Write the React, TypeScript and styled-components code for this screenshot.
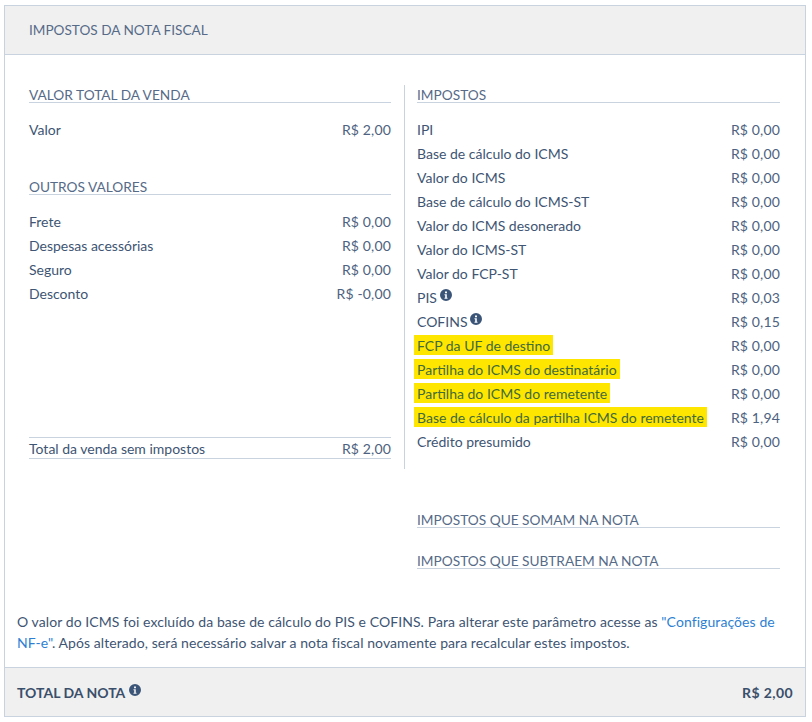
import styled, { createGlobalStyle } from "styled-components";

const Global = createGlobalStyle`
  html, body {
    margin: 0;
    padding: 0;
    background: #fff;
  }
  body {
    font-family: Lato, "Liberation Sans", sans-serif;
    font-size: 14px;
    color: #3e5573;
  }
`;

const Page = styled.div`
  padding: 5px 6px 0 4px;
`;

const Panel = styled.section`
  border: 1px solid #c9d3e0;
  background: #fff;
`;

const Header = styled.header`
  display: flex;
  align-items: center;
  box-sizing: border-box;
  height: 49px;
  padding: 0 24px 1px;
  background: #f0f0f0;
  border-bottom: 1px solid #c9d3e0;
  font-size: 13.6px;
  color: #566b88;
`;

const Columns = styled.div`
  display: grid;
  grid-template-columns: 375px 376px;
  margin: 30px 0 0 24px;
`;

const Column = styled.div<{ $divided?: boolean }>`
  display: flex;
  flex-direction: column;
  height: 384px;
  box-sizing: border-box;
  ${(p) =>
    p.$divided
      ? "border-left: 1px solid #c9d3e0; padding-left: 12px;"
      : "padding-right: 13px;"}
`;

const SectionTitle = styled.h3<{ $spaced?: boolean }>`
  margin: ${(p) => (p.$spaced ? "36px" : "0")} 0 14px;
  height: 17px;
  line-height: 20px;
  font-size: 13.7px;
  font-weight: 400;
  color: #566b88;
  border-bottom: 1px solid #c9d3e0;
`;

const Row = styled.div`
  display: flex;
  justify-content: space-between;
  align-items: center;
  height: 24px;
`;

const Label = styled.span<{ $marked?: boolean }>`
  display: inline-flex;
  align-items: center;
  gap: 3px;
  ${(p) =>
    p.$marked &&
    "height: 20px; margin-left: -3px; padding: 0 3px; background: #ffe600; color: #3f6a3a;"}
`;

const Value = styled.span`
  color: #4d6280;
  letter-spacing: 0.15px;
`;

const TotalRow = styled(Row)`
  margin-top: auto;
  margin-bottom: 10px;
  padding-top: 1px;
  height: 19px;
  border-top: 1px solid #c9d3e0;
  border-bottom: 1px solid #c9d3e0;
`;

const Extras = styled.div`
  margin: 41px 0 0 412px;
  width: 363px;
`;

const ExtraTitle = styled(SectionTitle)`
  margin: 0 0 23px;
`;

const Note = styled.p`
  margin: 42px 30px 14px 12px;
  line-height: 21px;
  font-size: 14px;
  letter-spacing: 0.08px;
`;

const NoteLink = styled.a`
  color: #2d7fd3;
  text-decoration: none;
`;

const Footer = styled.footer`
  display: flex;
  justify-content: space-between;
  align-items: center;
  height: 48px;
  padding: 0 12px;
  background: #f0f0f0;
  border-top: 1px solid #c9d3e0;
  font-weight: 700;
  color: #3a4f6b;
`;

const FooterLabel = styled.span`
  display: inline-flex;
  align-items: center;
  gap: 4px;
`;

const FooterValue = styled.span`
  letter-spacing: 0.4px;
`;

const InfoSvg = styled.svg`
  width: 12px;
  height: 12px;
  margin-top: -4px;
  fill: #3b5578;
`;

function InfoIcon() {
  return (
    <InfoSvg viewBox="0 0 12 12" aria-hidden="true">
      <path
        fillRule="evenodd"
        d="M6 0a6 6 0 1 1 0 12A6 6 0 0 1 6 0ZM5 2.4v1.8h2V2.4H5ZM4.5 5.2v1h.7v2.5h-.7v1h3v-1h-.7V5.2H4.5Z"
      />
    </InfoSvg>
  );
}

type Item = { label: string; value: string; info?: boolean; marked?: boolean };

const others: Item[] = [
  { label: "Frete", value: "R$ 0,00" },
  { label: "Despesas acessórias", value: "R$ 0,00" },
  { label: "Seguro", value: "R$ 0,00" },
  { label: "Desconto", value: "R$ -0,00" },
];

const taxes: Item[] = [
  { label: "IPI", value: "R$ 0,00" },
  { label: "Base de cálculo do ICMS", value: "R$ 0,00" },
  { label: "Valor do ICMS", value: "R$ 0,00" },
  { label: "Base de cálculo do ICMS-ST", value: "R$ 0,00" },
  { label: "Valor do ICMS desonerado", value: "R$ 0,00" },
  { label: "Valor do ICMS-ST", value: "R$ 0,00" },
  { label: "Valor do FCP-ST", value: "R$ 0,00" },
  { label: "PIS", value: "R$ 0,03", info: true },
  { label: "COFINS", value: "R$ 0,15", info: true },
  { label: "FCP da UF de destino", value: "R$ 0,00", marked: true },
  { label: "Partilha do ICMS do destinatário", value: "R$ 0,00", marked: true },
  { label: "Partilha do ICMS do remetente", value: "R$ 0,00", marked: true },
  { label: "Base de cálculo da partilha ICMS do remetente", value: "R$ 1,94", marked: true },
  { label: "Crédito presumido", value: "R$ 0,00" },
];

function ItemRow({ item }: { item: Item }) {
  return (
    <Row>
      <Label $marked={item.marked}>
        {item.label}
        {item.info && <InfoIcon />}
      </Label>
      <Value>{item.value}</Value>
    </Row>
  );
}

export default function App() {
  return (
    <Page>
      <Global />
      <Panel>
        <Header>IMPOSTOS DA NOTA FISCAL</Header>
        <Columns>
          <Column>
            <SectionTitle>VALOR TOTAL DA VENDA</SectionTitle>
            <ItemRow item={{ label: "Valor", value: "R$ 2,00" }} />
            <SectionTitle $spaced>OUTROS VALORES</SectionTitle>
            {others.map((item) => (
              <ItemRow key={item.label} item={item} />
            ))}
            <TotalRow>
              <Label>Total da venda sem impostos</Label>
              <Value>R$ 2,00</Value>
            </TotalRow>
          </Column>
          <Column $divided>
            <SectionTitle>IMPOSTOS</SectionTitle>
            {taxes.map((item) => (
              <ItemRow key={item.label} item={item} />
            ))}
          </Column>
        </Columns>
        <Extras>
          <ExtraTitle>IMPOSTOS QUE SOMAM NA NOTA</ExtraTitle>
          <ExtraTitle>IMPOSTOS QUE SUBTRAEM NA NOTA</ExtraTitle>
        </Extras>
        <Note>
          O valor do ICMS foi excluído da base de cálculo do PIS e COFINS. Para alterar este
          parâmetro acesse as <NoteLink>"Configurações de NF-e"</NoteLink>. Após alterado, será
          necessário salvar a nota fiscal novamente para recalcular estes impostos.
        </Note>
        <Footer>
          <FooterLabel>
            TOTAL DA NOTA
            <InfoIcon />
          </FooterLabel>
          <FooterValue>R$ 2,00</FooterValue>
        </Footer>
      </Panel>
    </Page>
  );
}
